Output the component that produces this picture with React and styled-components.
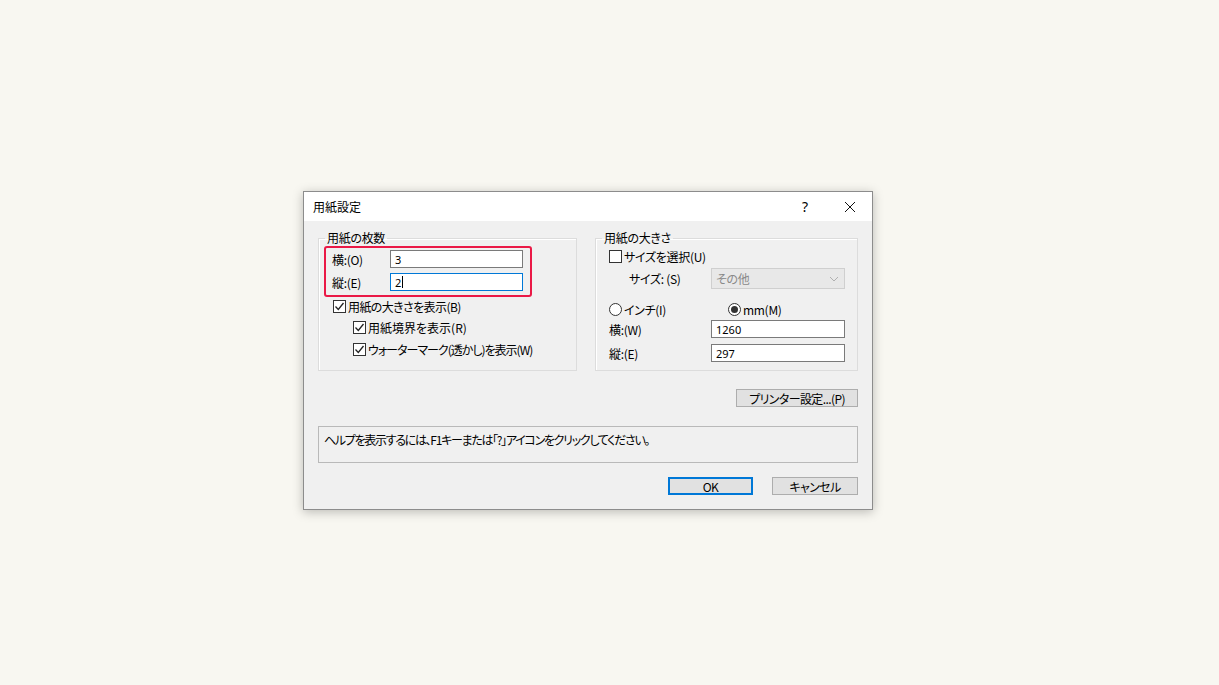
import React from 'react'
import styled, { createGlobalStyle } from 'styled-components'

const Global = createGlobalStyle`
  html, body {
    margin: 0;
    padding: 0;
    background: #f8f7f1;
  }
  body {
    font-family: "Noto Sans CJK JP", "Noto Sans", sans-serif;
    font-size: 12px;
    font-feature-settings: "palt";
    letter-spacing: -0.3px;
    color: #000;
  }
`

const Page = styled.div`
  min-height: 685px;
  box-sizing: border-box;
  padding: 191px 0 0 303px;
`

const Dialog = styled.div`
  width: 570px;
  height: 319px;
  box-sizing: border-box;
  border: 1px solid #8c8c8c;
  background: #f0f0f0;
  box-shadow: 0 2px 10px rgba(0, 0, 0, 0.25);
  display: flex;
  flex-direction: column;
`

const TitleBar = styled.div`
  height: 29px;
  background: #fff;
  display: flex;
  align-items: center;
  padding-left: 9px;
  font-size: 12px;
  letter-spacing: 0;
`

const Title = styled.div`
  flex: 1;
`

const TitleButton = styled.div`
  width: ${p => p.$w}px;
  height: 29px;
  display: flex;
  align-items: center;
  justify-content: center;
  font-size: 14px;
  font-family: "Noto Sans", sans-serif;
`

const Body = styled.div`
  flex: 1;
  padding: 10px 14px 0 14px;
  display: flex;
  flex-direction: column;
`

const Groups = styled.div`
  display: flex;
  gap: 18px;
`

const Group = styled.fieldset`
  margin: 0;
  width: ${p => p.$w}px;
  height: 140px;
  box-sizing: border-box;
  border: 1px solid #dcdcdc;
  border-radius: 0;
  padding: 0;
  box-shadow: inset 1px 1px 0 #fff;
`

const Legend = styled.legend`
  margin-left: 6px;
  padding: 0 2px;
  font-size: 12px;
  line-height: 14px;
`

const GroupInner = styled.div`
  padding: ${p => p.$pad};
  display: flex;
  flex-direction: column;
`

const Highlight = styled.div`
  width: 208px;
  height: 51px;
  box-sizing: border-box;
  border: 2.5px solid #ea1946;
  border-radius: 3px;
  padding: 2px 6px 0 6px;
  display: flex;
  flex-direction: column;
  gap: 5px;
`

const FieldRow = styled.div`
  display: flex;
  align-items: center;
  height: ${p => p.$h || 18}px;
  margin-top: ${p => p.$mt || 0}px;
  margin-left: ${p => p.$ml || 0}px;
`

const Label = styled.span`
  width: ${p => p.$w}px;
  flex: none;
  white-space: nowrap;
`

const TextBox = styled.div`
  width: ${p => p.$w}px;
  height: 18px;
  box-sizing: border-box;
  background: #fff;
  border: 1px solid ${p => (p.$focus ? '#0078d7' : '#7a7a7a')};
  padding-left: 4px;
  display: flex;
  align-items: center;
  font-family: "Noto Sans", sans-serif;
  font-size: 11px;
  letter-spacing: 0;
`

const Caret = styled.span`
  display: inline-block;
  width: 1px;
  height: 12px;
  background: #000;
  margin-left: 1px;
`

const Select = styled.div`
  width: 134px;
  height: 21px;
  box-sizing: border-box;
  background: #e8e8e8;
  border: 1px solid #cfcfcf;
  color: #8a8a8a;
  display: flex;
  align-items: center;
  padding-left: 4px;
  justify-content: space-between;
`

const Box = styled.span`
  width: 13px;
  height: 13px;
  box-sizing: border-box;
  border: 1px solid #333;
  background: #fff;
  flex: none;
  margin-right: 2px;
  display: inline-flex;
  align-items: center;
  justify-content: center;
  border-radius: ${p => (p.$round ? '50%' : '0')};
`

const Dot = styled.span`
  width: 7px;
  height: 7px;
  border-radius: 50%;
  background: #333;
`

const CheckRow = styled.div`
  display: flex;
  align-items: center;
  height: 16px;
  margin-left: ${p => p.$ml || 0}px;
  margin-top: ${p => p.$mt || 0}px;
  white-space: nowrap;
  letter-spacing: ${p => (p.$ls != null ? p.$ls : -0.3)}px;
`

const Button = styled.div`
  width: ${p => p.$w}px;
  height: 18px;
  box-sizing: border-box;
  background: #e1e1e1;
  border: ${p => (p.$default ? '2px solid #0078d7' : '1px solid #adadad')};
  display: flex;
  align-items: center;
  justify-content: center;
  font-size: 12px;
  letter-spacing: -0.6px;
`

const ButtonRow = styled.div`
  display: flex;
  justify-content: flex-end;
  gap: ${p => p.$gap || 0}px;
  margin-top: ${p => p.$mt}px;
`

const HelpBox = styled.div`
  height: 37px;
  box-sizing: border-box;
  border: 1px solid #b9b9b9;
  margin-top: 19px;
  padding: 4px 5px;
  font-size: 12px;
  letter-spacing: -1.3px;
`

const Check = () => (
  <svg width="11" height="11" viewBox="0 0 11 11">
    <path d="M1.5 5.5 L4.3 8.5 L9.5 2" fill="none" stroke="#222" strokeWidth="1.3" />
  </svg>
)

function CheckBox({ checked, label, ml, mt, ls }) {
  return (
    <CheckRow $ml={ml} $mt={mt} $ls={ls}>
      <Box>{checked && <Check />}</Box>
      {label}
    </CheckRow>
  )
}

function Radio({ checked, label }) {
  return (
    <CheckRow>
      <Box $round>{checked && <Dot />}</Box>
      {label}
    </CheckRow>
  )
}

export default function App() {
  return (
    <>
      <Global />
      <Page>
        <Dialog>
          <TitleBar>
            <Title>用紙設定</Title>
            <TitleButton $w={46}>?</TitleButton>
            <TitleButton $w={44}>
              <svg width="12" height="12" viewBox="0 0 12 12">
                <path d="M1 1 L11 11 M11 1 L1 11" stroke="#111" strokeWidth="1" />
              </svg>
            </TitleButton>
          </TitleBar>
          <Body>
            <Groups>
              <Group $w={259}>
                <Legend>用紙の枚数</Legend>
                <GroupInner $pad="1px 0 0 5px">
                  <Highlight>
                    <FieldRow>
                      <Label $w={58}>横:(O)</Label>
                      <TextBox $w={133}>3</TextBox>
                    </FieldRow>
                    <FieldRow>
                      <Label $w={58}>縦:(E)</Label>
                      <TextBox $w={133} $focus>2<Caret /></TextBox>
                    </FieldRow>
                  </Highlight>
                  <CheckBox checked label="用紙の大きさを表示(B)" ml={9} mt={1} ls={-0.6} />
                  <CheckBox checked label="用紙境界を表示(R)" ml={29} mt={5} ls={0} />
                  <CheckBox checked label="ウォーターマーク(透かし)を表示(W)" ml={29} mt={6} ls={-1} />
                </GroupInner>
              </Group>
              <Group $w={263}>
                <Legend>用紙の大きさ</Legend>
                <GroupInner $pad="3px 12px 0 13px">
                  <CheckBox label="サイズを選択(U)" />
                  <FieldRow $h={21} $mt={4} $ml={20}>
                    <Label $w={82}>サイズ: (S)</Label>
                    <Select>
                      その他
                      <svg width="18" height="10" viewBox="0 0 18 10">
                        <path d="M4 3 L8 7 L12 3" fill="none" stroke="#b0b0b0" strokeWidth="1" />
                      </svg>
                    </Select>
                  </FieldRow>
                  <FieldRow $h={16} $mt={12}>
                    <Label $w={119}><Radio label="インチ(I)" /></Label>
                    <Radio checked label="mm(M)" />
                  </FieldRow>
                  <FieldRow $mt={3}>
                    <Label $w={102}>横:(W)</Label>
                    <TextBox $w={134}>1260</TextBox>
                  </FieldRow>
                  <FieldRow $mt={6}>
                    <Label $w={102}>縦:(E)</Label>
                    <TextBox $w={134}>297</TextBox>
                  </FieldRow>
                </GroupInner>
              </Group>
            </Groups>
            <ButtonRow $mt={18}>
              <Button $w={122}>プリンター設定...(P)</Button>
            </ButtonRow>
            <HelpBox>ヘルプを表示するには、F1キーまたは「?」アイコンをクリックしてください。</HelpBox>
            <ButtonRow $mt={14} $gap={19}>
              <Button $w={85} $default>OK</Button>
              <Button $w={86}>キャンセル</Button>
            </ButtonRow>
          </Body>
        </Dialog>
      </Page>
    </>
  )
}
